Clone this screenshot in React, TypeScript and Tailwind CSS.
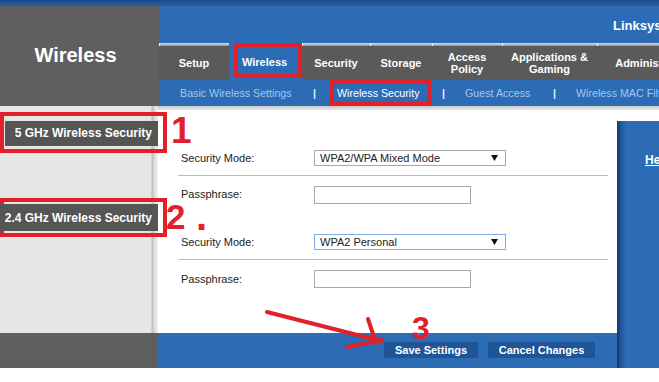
import React from 'react';

const TABS = [
  { lines: ['Setup'], w: 'w-[70px]' },
  { lines: ['Wireless'], w: 'w-[73px]', active: true },
  { lines: ['Security'], w: 'w-[68px]' },
  { lines: ['Storage'], w: 'w-[62px]' },
  { lines: ['Access', 'Policy'], w: 'w-[70px]' },
  { lines: ['Applications &', 'Gaming'], w: 'w-[95px]' },
  { lines: ['Administration'], w: 'w-[114px]' },
];

function Tab({ lines, w, active }: { lines: string[]; w: string; active?: boolean }) {
  if (active) {
    return (
      <div className={`${w} shrink-0 bg-[#2b6cb5] pl-[5px]`}>
        <div className="w-[68px] h-[35px] border-4 border-[#e2202c] flex items-center pl-[4px] pt-[3px] text-[11px] font-bold text-white">
          {lines[0]}
        </div>
      </div>
    );
  }
  return (
    <div className={`${w} shrink-0 flex flex-col`}>
      <div className="h-[3px] bg-[linear-gradient(#e2e2ea,#8f8f9e)] border-l border-l-[#f2f2f2]" />
      <div className="flex-1 bg-[#5a5a5a] flex flex-col items-center justify-center text-[11px] leading-[12px] font-bold text-white text-center whitespace-nowrap">
        {lines.map((l) => (
          <span key={l}>{l}</span>
        ))}
      </div>
    </div>
  );
}

function Select({ value, focus }: { value: string; focus?: boolean }) {
  return (
    <div
      className={`w-[192px] h-[16px] border ${focus ? 'border-[#86abe2]' : 'border-[#a8a8a8]'} bg-white flex items-center justify-between pl-[5px] pr-[7px] text-[11px] text-[#222]`}
    >
      <span>{value}</span>
      <svg width="7" height="6" viewBox="0 0 7 6">
        <path d="M0 0h7L3.5 6z" fill="#111" />
      </svg>
    </div>
  );
}

function Row({ label, children }: { label: string; children: React.ReactNode }) {
  return (
    <div className="flex items-center">
      <div className="w-[136px] pl-[3px] text-[11px] text-[#222]">{label}</div>
      {children}
    </div>
  );
}

export default function App() {
  return (
    <div className="relative w-[659px] h-[382px] overflow-hidden bg-white font-['Liberation_Sans',Arial,sans-serif]">
      <div className="h-[6px] bg-[linear-gradient(#1b4a86,#2760a6)]" />

      {/* header */}
      <div className="flex h-[100px]">
        <div className="w-[159px] shrink-0 bg-[#5f5f5f] flex items-center justify-center pr-[8px] pb-[2px]">
          <span className="text-[20px] font-bold text-white">Wireless</span>
        </div>
        <div className="flex-1 flex flex-col overflow-hidden">
          <div className="h-[37px] bg-[#2b6cb5] flex items-center pl-[454px] pt-[2px]">
            <span className="text-[13px] font-bold text-white whitespace-nowrap">Linksys Smart Wi-Fi</span>
          </div>
          <div className="h-[37px] flex">
            {TABS.map((t) => (
              <Tab key={t.lines[0]} {...t} />
            ))}
          </div>
          <div className="h-[26px] bg-[#2b6cb5] flex items-stretch text-[10.7px] whitespace-nowrap">
            <div className="w-[21px] shrink-0" />
            <div className="w-[133px] shrink-0 flex items-center text-[#a9c5ee]">Basic Wireless Settings</div>
            <div className="w-[17px] shrink-0 flex items-center font-bold text-[#e8eef8]">|</div>
            <div className="w-[101px] shrink-0 border-4 border-[#e2202c] flex items-center pl-[3px] text-white">
              Wireless Security
            </div>
            <div className="w-[11px] shrink-0" />
            <div className="w-[23px] shrink-0 flex items-center font-bold text-[#e8eef8]">|</div>
            <div className="w-[88px] shrink-0 flex items-center text-[#a9c5ee]">Guest Access</div>
            <div className="w-[23px] shrink-0 flex items-center font-bold text-[#e8eef8]">|</div>
            <div className="shrink-0 flex items-center text-[#a9c5ee]">Wireless MAC Filter</div>
          </div>
        </div>
      </div>

      {/* body */}
      <div className="flex h-[262px]">
        <div className="w-[158px] shrink-0 flex flex-col">
          <div className="relative z-10 flex-1 flex flex-col bg-[linear-gradient(to_right,#e6e6e6_151px,#b9b9b9_152px,#d9d9d9_154px,#f2f2f2_158px)]">
            <div className="mt-[6px] w-[167px] h-[41px] border-4 border-[#e2202c] flex items-center">
              <div className="ml-[1px] mt-[1px] w-[153px] h-[25px] bg-[#555555] flex items-center justify-end pr-[6px] text-[12px] font-bold text-white whitespace-nowrap">
                5 GHz Wireless Security
              </div>
            </div>
            <div className="mt-[45px] w-[167px] h-[39px] border-4 border-[#e2202c] flex items-center">
              <div className="-ml-[4px] w-[158px] h-[27px] bg-[#555555] flex items-center justify-end pr-[6px] text-[12px] font-bold text-white whitespace-nowrap">
                2.4 GHz Wireless Security
              </div>
            </div>
          </div>
          <div className="h-[35px] bg-[#5e5e5e]" />
        </div>

        <div className="w-[459px] shrink-0 flex flex-col">
          <div className="h-[4px] bg-[linear-gradient(#c9c9c9,#e9e9e9)]" />
          <div className="flex-1 pt-[40px] pl-[20px]">
            <div className="w-[430px]">
              <Row label="Security Mode:">
                <Select value="WPA2/WPA Mixed Mode" />
              </Row>
              <div className="mt-[8px] h-px bg-[#b6b6d4]" />
              <div className="mt-[10px]">
                <Row label="Passphrase:">
                  <div className="w-[157px] h-[18px] border border-[#a8a8a8]" />
                </Row>
              </div>
              <div className="mt-[30px]">
                <Row label="Security Mode:">
                  <Select value="WPA2 Personal" focus />
                </Row>
              </div>
              <div className="mt-[9px] h-px bg-[#b6b6d4]" />
              <div className="mt-[10px]">
                <Row label="Passphrase:">
                  <div className="w-[157px] h-[18px] border border-[#a8a8a8]" />
                </Row>
              </div>
            </div>
          </div>
          <div className="h-[35px] bg-[#2b6cb5] flex justify-end items-start gap-[10px] pt-[9px] pr-[22px]">
            <div className="w-[94px] h-[16px] bg-[#1f5596] flex items-center justify-center text-[11px] font-bold text-white">
              Save Settings
            </div>
            <div className="w-[107px] h-[16px] bg-[#1f5596] flex items-center justify-center text-[11px] font-bold text-white">
              Cancel Changes
            </div>
          </div>
        </div>

        <div className="flex-1 flex flex-col">
          <div className="h-[4px] bg-[linear-gradient(#c9c9c9,#e9e9e9)]" />
          <div className="h-[11px]" />
          <div className="flex-1 bg-[linear-gradient(to_right,#16365f,#2156a0_4px,#2b6cb5_9px)] pl-[28px] pt-[26px]">
            <span className="text-[12px] font-bold text-white underline whitespace-nowrap">Help...</span>
          </div>
        </div>
      </div>

      {/* annotations */}
      <div className="absolute inset-0 pointer-events-none text-[#e2202c] font-bold leading-none">
        <span className="absolute left-[171px] top-[112px] text-[37px]">1</span>
        <span className="absolute left-[166px] top-[199px] text-[35px]">2</span>
        <span className="absolute left-[196px] top-[208px] text-[40px] leading-[16px]">.</span>
        <span className="absolute left-[412px] top-[312px] text-[32px]">3</span>
        <svg className="absolute left-0 top-0" width="659" height="382" viewBox="0 0 659 382">
          <g stroke="#e2202c" strokeWidth="4" strokeLinecap="round" fill="none">
            <path d="M267 312 L381 341" />
            <path d="M368 319 L376 343" />
            <path d="M347 347 L382 340" />
          </g>
        </svg>
      </div>
    </div>
  );
}
